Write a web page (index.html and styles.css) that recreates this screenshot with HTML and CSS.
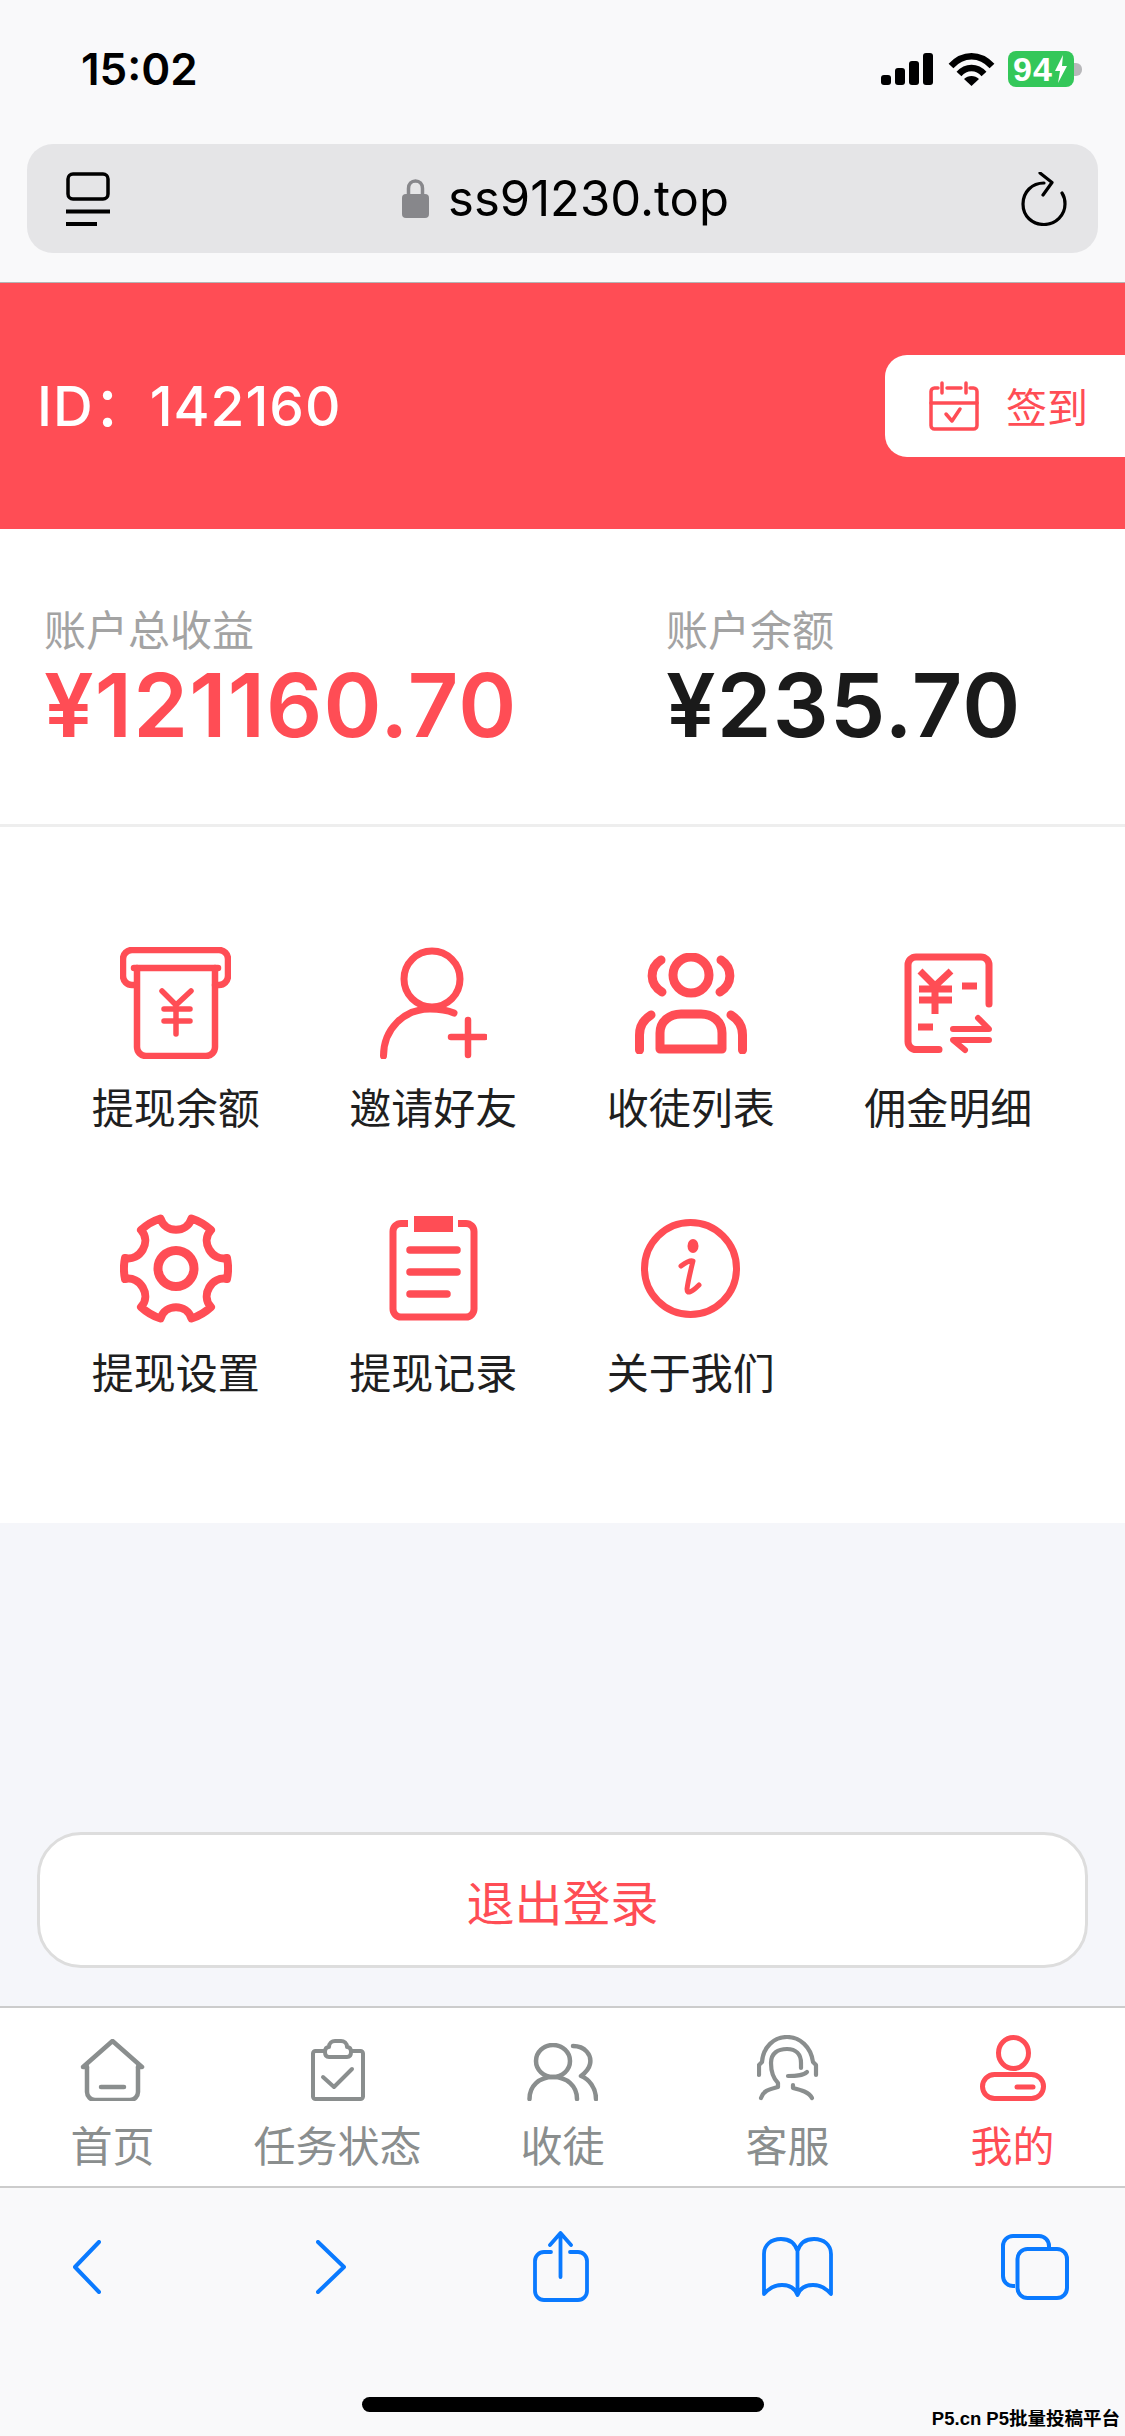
FILE: index.html
```html
<!DOCTYPE html>
<html lang="zh-CN">
<head>
  <meta charset="UTF-8">
  <meta name="viewport" content="width=device-width, initial-scale=1.0">
  <title>我的</title>
  <link rel="stylesheet" href="styles.css">
</head>
<body>
  <div class="page">
    <!-- Safari top -->
    <div class="safari-top">
      <div class="statusbar">
        <span class="time">15:02</span>
        <div class="status-icons">
          <svg class="signal" viewBox="0 0 52 32" width="52" height="32"><rect x="0" y="22" width="10" height="10" rx="3"/><rect x="14" y="15" width="10" height="17" rx="3"/><rect x="28" y="8" width="10" height="24" rx="3"/><rect x="42" y="0" width="10" height="32" rx="3"/></svg>
          <svg class="wifi" viewBox="0 0 47 33" width="47" height="33"><path d="M3 13C15 0 32 0 44 13" fill="none" stroke="#000" stroke-width="6.5"/><path d="M11 21C18 13 29 13 36 21" fill="none" stroke="#000" stroke-width="6.5"/><path d="M23.5 33L16 26C20 22 27 22 31 26Z"/></svg>
          <div class="battery">
            <span class="battery-num">94</span>
            <svg viewBox="0 0 14 28" width="14" height="28"><path d="M9 0L1 16H6L4 28L13 11H8Z" fill="#fff"/></svg>
          </div>
          <span class="battery-nub"></span>
        </div>
      </div>
      <div class="urlbar">
        <svg viewBox="0 0 44 54" width="44" height="54" fill="none" stroke="#000" stroke-width="3.5"><rect x="2" y="2" width="40" height="25" rx="5"/><path d="M0 39.500H44" stroke-width="4"/><path d="M0 52H31" stroke-width="4"/></svg>
        <div class="url">
          <svg viewBox="0 0 27 39" width="27" height="39"><path d="M6.500 17V9.500C6.500 5 9.500 2 13.500 2S20.500 5 20.500 9.500V17" fill="none" stroke="#87878b" stroke-width="3.500"/><rect x="0" y="15" width="27" height="24" rx="4" fill="#87878b"/></svg>
          <span>ss91230.top</span>
        </div>
        <svg viewBox="0 0 46 54" width="46" height="54" fill="none" stroke="#000" stroke-width="3.200" stroke-linecap="round" stroke-linejoin="round"><path d="M23 11C11 11 2 20 2 32S11 52.500 23 52.500 44 43 44 32C44 28 43 24 41 21"/><path d="M19 1L31 10.500 22 23"/></svg>
      </div>
    </div>

    <!-- header -->
    <div class="user-head">
      <span class="user-id">ID：142160</span>
      <div class="sign-btn">
        <svg viewBox="0 0 50 50" width="50" height="50" fill="none" stroke="#ff4d55" stroke-width="3.500" stroke-linecap="round" stroke-linejoin="round"><path d="M9 7H5.500a3.500 3.500 0 0 0-3.500 3.500V44.500a3.500 3.500 0 0 0 3.500 3.500H44.500a3.500 3.500 0 0 0 3.500-3.500V10.500a3.500 3.500 0 0 0-3.500-3.500H41"/><path d="M18 7H32"/><path d="M13 2V12M37 2V12"/><path d="M2 22H48"/><path d="M17 33L23 40 31 28"/></svg>
        <span>签到</span>
      </div>
    </div>

    <!-- totals -->
    <div class="stats">
      <div class="stat stat-first">
        <div class="stat-label">账户总收益</div>
        <div class="stat-value red">¥121160.70</div>
      </div>
      <div class="stat">
        <div class="stat-label">账户余额</div>
        <div class="stat-value">¥235.70</div>
      </div>
    </div>

    <!-- menu -->
    <div class="menu">
      <div class="menu-item">
        <div class="menu-icon">
          <svg viewBox="0 0 111 112" width="111" height="112" fill="none" stroke="#ff4d55" stroke-width="6.500" stroke-linecap="round" stroke-linejoin="round"><path d="M16 38H12a9 9 0 0 1-9-9V12a9 9 0 0 1 9-9h87a9 9 0 0 1 9 9v17a9 9 0 0 1-9 9h-4"/><path d="M14 21H98"/><path d="M17 21V100a9 9 0 0 0 9 9h60a9 9 0 0 0 9-9V21"/><path d="M42 44L56 58 71 44M56 58V87M44 62H70M44 74H70" stroke-width="5.500"/></svg>
        </div>
        <span>提现余额</span>
      </div>
      <div class="menu-item">
        <div class="menu-icon">
          <svg viewBox="0 0 107 112" width="107" height="112" fill="none" stroke="#ff4d55" stroke-width="7" stroke-linecap="round"><circle cx="52" cy="32" r="28"/><path d="M3.500 109C3.500 82 24 62 50 62 59 62 67 63 74 66"/><path d="M71 90H105M88 73V108" stroke-width="6.500"/></svg>
        </div>
        <span>邀请好友</span>
      </div>
      <div class="menu-item">
        <div class="menu-icon">
          <svg viewBox="0 0 112 101" width="112" height="101" fill="none" stroke="#ff4d55" stroke-width="9" stroke-linecap="round" stroke-linejoin="round"><circle cx="56" cy="22" r="18"/><path d="M26 7C14 15 14 31 27 39M86 7C98 15 98 31 85 39"/><path d="M25 96V80C25 68 35 61 46 61H66C77 61 87 68 87 80V96Z"/><path d="M16 62C8 67 4.500 73 4.500 82V97M96 62C104 67 107.500 73 107.500 82V97"/></svg>
        </div>
        <span>收徒列表</span>
      </div>
      <div class="menu-item">
        <div class="menu-icon">
          <svg viewBox="0 0 89 101" width="89" height="101" fill="none" stroke="#ff4d55" stroke-width="7" stroke-linejoin="round"><path d="M35 96.500H12a8 8 0 0 1-8-8V12a8 8 0 0 1 8-8H77a8 8 0 0 1 8 8V51" stroke-linecap="round"/><path d="M16 18L31 33 47 18M31 33V61M15 36H48M15 47H48M58 33H73M14 74H29"/><path d="M49 76H85L74 65M85 87H49L61 97" stroke-width="6" stroke-linecap="round"/></svg>
        </div>
        <span>佣金明细</span>
      </div>
      <div class="menu-item">
        <div class="menu-icon">
          <svg viewBox="0 0 112 109" width="112" height="109" fill="none" stroke="#ff4d55" stroke-width="8" stroke-linejoin="round"><g transform="translate(56 54.500)"><path d="M-15.500 -50C-11 -35 11 -35 15.500 -50A52 52 0 0 1 35 -38.500C24 -27 36 -7 51 -10.500A52 52 0 0 1 51 10.500C36 7 24 27 35 38.500A52 52 0 0 1 15.500 50C11 35 -11 35 -15.500 50A52 52 0 0 1 -35 38.500C-24 27 -36 7 -51 10.500A52 52 0 0 1 -51 -10.500C-36 -7 -24 -27 -35 -38.500A52 52 0 0 1 -15.500 -50Z"/><circle r="18" stroke-width="9"/></g></svg>
        </div>
        <span>提现设置</span>
      </div>
      <div class="menu-item">
        <div class="menu-icon">
          <svg viewBox="0 0 89 105" width="89" height="105" fill="none" stroke="#ff4d55" stroke-width="7" stroke-linecap="round"><path d="M19 7.500H12a8 8 0 0 0-8 8V93a8 8 0 0 0 8 8H77a8 8 0 0 0 8-8V15.500a8 8 0 0 0-8-8H69" stroke-linecap="butt"/><rect x="25" y="0" width="39" height="16" fill="#ff4d55" stroke="none"/><path d="M21 34H68M21 56H68M21 78H58" stroke-width="7.500"/></svg>
        </div>
        <span>提现记录</span>
      </div>
      <div class="menu-item">
        <div class="menu-icon">
          <svg viewBox="0 0 99 99" width="99" height="99" fill="none" stroke="#ff4d55" stroke-width="7" stroke-linecap="round" stroke-linejoin="round"><circle cx="49.500" cy="49.500" r="46"/><ellipse cx="52" cy="27" rx="5.500" ry="7" fill="#ff4d55" stroke="none"/><path d="M40 47C44 44 49 41 52 42 50 50 47 62 46 70 46 75 50 74 58 66" stroke-width="5"/></svg>
        </div>
        <span>关于我们</span>
      </div>
    </div>

    <!-- logout -->
    <div class="main-fill">
      <div class="logout-btn">退出登录</div>
    </div>

    <!-- tabs -->
    <div class="tabbar">
      <div class="tab">
        <div class="tab-icon">
          <svg viewBox="0 0 65 62" width="65" height="62" fill="none" stroke="#8a8e8e" stroke-width="4.500" stroke-linecap="round" stroke-linejoin="round"><path d="M7 28V53a8 8 0 0 0 8 8H50a8 8 0 0 0 8-8V28"/><path d="M7 28H3L32.500 2 62 28H58"/><path d="M21 48H44"/></svg>
        </div>
        <span>首页</span>
      </div>
      <div class="tab">
        <div class="tab-icon">
          <svg viewBox="0 0 54 62" width="54" height="62" fill="none" stroke="#8a8e8e" stroke-width="4" stroke-linecap="round" stroke-linejoin="round"><path d="M13 12H4.500A2.500 2.500 0 0 0 2 14.500V57.500A2.500 2.500 0 0 0 4.500 60H49.500A2.500 2.500 0 0 0 52 57.500V14.500A2.500 2.500 0 0 0 49.500 12H41"/><path d="M18 8C18 4 21 2 24 2H30C33 2 36 4 36 8 39 8 40 10 40 13S39 18 36 18H18C15 18 14 16 14 13S15 8 18 8Z"/><path d="M12 38L23 48 41 30"/></svg>
        </div>
        <span>任务状态</span>
      </div>
      <div class="tab">
        <div class="tab-icon">
          <svg viewBox="0 0 71 58" width="71" height="58" fill="none" stroke="#8a8e8e" stroke-width="4.500" stroke-linecap="round" stroke-linejoin="round"><ellipse cx="26" cy="18" rx="17" ry="16"/><path d="M2.500 56C2.500 43 12 34 26 34S50 43 50 56"/><path d="M46 3C58 3 65 12 63 21 62 26 58 30 54 33 62 36 69 45 69 56"/></svg>
        </div>
        <span>收徒</span>
      </div>
      <div class="tab">
        <div class="tab-icon">
          <svg viewBox="0 0 62 66" width="62" height="66" fill="none" stroke="#8a8e8e" stroke-width="4.200" stroke-linecap="round" stroke-linejoin="round"><path d="M2 40V30L5 27C6 12 17 2 30 2 43 2 54 12 56 27L59 30V40"/><path d="M14 28C14 18 21 14 30 14 39 14 44 19 44 28V33"/><path d="M50 37C46 41 38 41 31 41"/><path d="M14 28C14 38 17 44 21 48V52C14 54 6 55 4 63"/><path d="M36 50V53C44 55 52 57 55 63"/></svg>
        </div>
        <span>客服</span>
      </div>
      <div class="tab active">
        <div class="tab-icon">
          <svg viewBox="0 0 66 66" width="66" height="66" fill="none" stroke="#ff4d55" stroke-width="5" stroke-linecap="round"><ellipse cx="33.500" cy="18" rx="15" ry="15.500"/><rect x="2.500" y="39.500" width="61" height="24" rx="12"/><path d="M37 52H53"/></svg>
        </div>
        <span>我的</span>
      </div>
    </div>

    <!-- Safari bottom -->
    <div class="safari-bottom">
      <div class="nav-icons">
        <svg class="nav-back" viewBox="0 0 28 54" width="28" height="54" fill="none" stroke="#0a7aff" stroke-width="4" stroke-linecap="round" stroke-linejoin="round"><path d="M26 2L2 27 26 52"/></svg>
        <svg class="nav-forward" viewBox="0 0 30 54" width="30" height="54" fill="none" stroke="#0a7aff" stroke-width="4" stroke-linecap="round" stroke-linejoin="round"><path d="M2 2L28 27 2 52"/></svg>
        <svg viewBox="0 0 56 71" width="56" height="71" fill="none" stroke="#0a7aff" stroke-width="3.800" stroke-linecap="round" stroke-linejoin="round"><path d="M18 21H11a9 9 0 0 0-9 9V60a9 9 0 0 0 9 9H45a9 9 0 0 0 9-9V30a9 9 0 0 0-9-9H37"/><path d="M27.500 3V46M17 14L27.500 2 38 14"/></svg>
        <svg viewBox="0 0 71 60" width="71" height="60" fill="none" stroke="#0a7aff" stroke-width="3.800" stroke-linejoin="round"><path d="M35.500 14C33 6 27 2 19 2 9 2 2 8 2 17V57C8 50 15 48 20 48 27 48 33 51 35.500 58 38 51 44 48 51 48 56 48 63 50 69 57V17C69 8 62 2 52 2 44 2 38 6 35.500 14V58"/></svg>
        <svg viewBox="0 0 68 66" width="68" height="66" fill="none" stroke="#0a7aff" stroke-width="4" stroke-linejoin="round"><path d="M14 52H12A10 10 0 0 1 2 42V12A10 10 0 0 1 12 2H38A10 10 0 0 1 48 12V14"/><rect x="16.500" y="15" width="49.500" height="49" rx="10"/></svg>
      </div>
      <div class="home-bar"></div>
      <span class="watermark">P5.cn P5批量投稿平台</span>
    </div>
  </div>
</body>
</html>
```

FILE: styles.css
```css
* {
  box-sizing: border-box;
}
body {
  margin: 0;
  font-family: "Liberation Sans", "Noto Sans CJK SC", sans-serif;
  background: #fff;
}
.page {
  width: 1125px;
  height: 2436px;
  display: flex;
  flex-direction: column;
  overflow: hidden;
}
.safari-top {
  height: 283px;
  background: #f9f9fa;
  border-bottom: 1px solid #b4b4b4;
}
.statusbar {
  height: 138px;
  display: flex;
  align-items: center;
  justify-content: space-between;
  padding: 0 43px 0 81px;
}
.time {
  font-family: Inter, sans-serif;
  font-size: 44px;
  font-weight: 600;
  color: #000;
}
.status-icons {
  display: flex;
  align-items: center;
}
.wifi {
  margin-left: 15px;
}
.battery {
  width: 66px;
  height: 36px;
  margin-left: 13px;
  background: #34c759;
  border-radius: 8px;
  display: flex;
  align-items: center;
  padding-left: 5px;
  gap: 1px;
}
.battery-num {
  font-size: 34px;
  font-weight: 700;
  color: #fff;
  letter-spacing: 1px;
}
.battery-nub {
  width: 8px;
  height: 13px;
  background: #b8b8ba;
  border-radius: 0 6px 6px 0;
}
.urlbar {
  height: 109px;
  margin: 6px 27px 0;
  padding: 0 31px 0 39px;
  background: #e5e5e7;
  border-radius: 26px;
  display: flex;
  align-items: center;
}
.url {
  flex: 1;
  display: flex;
  align-items: center;
  justify-content: center;
  gap: 19px;
  font-family: Inter, sans-serif;
  font-size: 49px;
  color: #000;
}
.user-head {
  height: 246px;
  background: #ff4d55;
  display: flex;
  align-items: center;
  justify-content: space-between;
  padding-left: 37px;
}
.user-id {
  margin-bottom: 8px;
  font-family: Inter, "Noto Sans CJK SC", sans-serif;
  font-size: 55px;
  font-weight: 500;
  letter-spacing: 1px;
  color: #fff;
}
.sign-btn {
  width: 240px;
  height: 102px;
  background: #fff;
  border-radius: 22px 0 0 22px;
  display: flex;
  align-items: center;
  padding-left: 44px;
  gap: 27px;
  font-size: 41px;
  color: #ff4d55;
}
.sign-btn span {
  margin-bottom: 3px;
}
.stats {
  height: 298px;
  padding: 77px 0 0 44px;
  display: flex;
  background: #fff;
  border-bottom: 3px solid #eee;
}
.stat-first {
  width: 622px;
}
.stat-label {
  font-size: 42px;
  line-height: 52px;
  color: #a3a3a3;
}
.stat-value {
  margin-top: -1px;
  font-family: Inter, sans-serif;
  font-size: 88px;
  line-height: 96px;
  font-weight: 600;
  letter-spacing: 1.2px;
  color: #1a1a1a;
}
.stat-value.red {
  color: #ff4d55;
}
.menu {
  height: 696px;
  padding: 120px 0 0 47px;
  background: #fff;
  display: grid;
  grid-template-columns: repeat(4, 257.5px);
  grid-auto-rows: 191px;
  row-gap: 74px;
}
.menu-item {
  display: flex;
  flex-direction: column;
  align-items: center;
  font-size: 42px;
  line-height: 56px;
  color: #1f1f1f;
}
.menu-icon {
  height: 112px;
  flex-shrink: 0;
  margin-bottom: 23px;
  display: flex;
  align-items: center;
  justify-content: center;
}
.main-fill {
  flex: 1;
  background: #f5f6fa;
  display: flex;
  flex-direction: column;
  justify-content: flex-end;
  padding: 0 37px 38px;
}
.logout-btn {
  height: 136px;
  background: #fff;
  border: 3px solid #ddd;
  border-radius: 44px;
  display: flex;
  align-items: center;
  justify-content: center;
  font-size: 48px;
  color: #ff4d55;
}
.tabbar {
  height: 182px;
  padding-top: 27px;
  background: #fff;
  border-top: 2px solid #ccc;
  border-bottom: 2px solid #ccc;
  display: grid;
  grid-template-columns: repeat(5, 225px);
}
.tab {
  display: flex;
  flex-direction: column;
  align-items: center;
  font-size: 42px;
  line-height: 50px;
  color: #8a8e8e;
}
.tab.active {
  color: #ff4d55;
}
.tab-icon {
  height: 66px;
  margin-bottom: 22px;
  display: flex;
  align-items: flex-end;
}
.safari-bottom {
  height: 248px;
  position: relative;
  background: #f9f9fa;
  padding-top: 43px;
}
.nav-icons {
  height: 71px;
  display: grid;
  grid-template-columns: repeat(5, 237px);
  margin-left: -32px;
  justify-items: center;
  align-items: center;
}
.nav-back {
  margin-right: -1px;
}
.nav-forward {
  margin-left: 15px;
}
.home-bar {
  width: 402px;
  height: 15px;
  margin: 95px auto 0;
  background: #000;
  border-radius: 8px;
}
.watermark {
  position: absolute;
  right: 5px;
  bottom: 6px;
  font-size: 18.5px;
  font-weight: 700;
  line-height: 22px;
  color: #000;
}
```
